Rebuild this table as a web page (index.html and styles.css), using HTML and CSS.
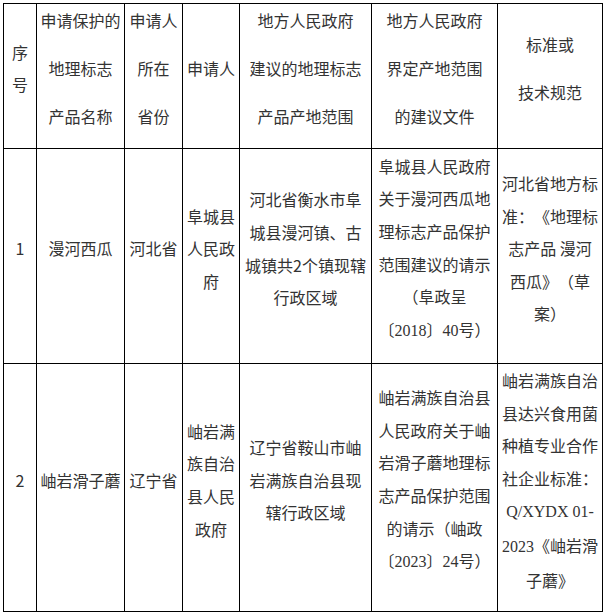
FILE: index.html
```html
<!DOCTYPE html>
<html lang="zh-CN">
<head>
<meta charset="utf-8">
<link rel="stylesheet" href="styles.css">
</head>
<body>
<table class="gi">
  <colgroup>
    <col class="c1"><col class="c2"><col class="c3"><col class="c4"><col class="c5"><col class="c6"><col class="c7">
  </colgroup>
  <tr class="r-head">
    <td><p class="tight">序<br>号</p></td>
    <td><p>申请保护的</p><p>地理标志</p><p>产品名称</p></td>
    <td><p>申请人</p><p>所在</p><p>省份</p></td>
    <td><p>申请人</p></td>
    <td><p>地方人民政府</p><p>建议的地理标志</p><p>产品产地范围</p></td>
    <td><p>地方人民政府</p><p>界定产地范围</p><p>的建议文件</p></td>
    <td><p>标准或</p><p>技术规范</p></td>
  </tr>
  <tr class="r-one">
    <td><p>1</p></td>
    <td><p>漫河西瓜</p></td>
    <td><p>河北省</p></td>
    <td><p>阜城县<br>人民政<br>府</p></td>
    <td><p>河北省衡水市阜<br>城县漫河镇、古<br>城镇共2个镇现辖<br>行政区域</p></td>
    <td><p>阜城县人民政府<br>关于漫河西瓜地<br>理标志产品保护<br>范围建议的请示<br>（阜政呈<br>〔<span class="lat">2018</span>〕<span class="lat">40</span>号）</p></td>
    <td><p>河北省地方标<br>准：《地理标<br>志产品 漫河<br>西瓜》（草<br>案）</p></td>
  </tr>
  <tr class="r-two">
    <td><p>2</p></td>
    <td><p>岫岩滑子蘑</p></td>
    <td><p>辽宁省</p></td>
    <td><p>岫岩满<br>族自治<br>县人民<br>政府</p></td>
    <td><p>辽宁省鞍山市岫<br>岩满族自治县现<br>辖行政区域</p></td>
    <td><p>岫岩满族自治县<br>人民政府关于岫<br>岩滑子蘑地理标<br>志产品保护范围<br>的请示（岫政<br>〔<span class="lat">2023</span>〕<span class="lat">24</span>号）</p></td>
    <td><p>岫岩满族自治<br>县达兴食用菌<br>种植专业合作<br>社企业标准：<br><span class="lat">Q/XYDX 01-</span><br><span class="lat">2023</span>《岫岩滑<br>子蘑》</p></td>
  </tr>
</table>
</body>
</html>
```

FILE: styles.css
```css
html, body {
  margin: 0;
  padding: 0;
  background: #ffffff;
}
body {
  padding: 3px 0 0 3px;
  font-family: "Noto Sans CJK SC", "Noto Sans", sans-serif;
  font-size: 16px;
  color: #333333;
  text-spacing-trim: space-all;
}
.gi {
  border-collapse: collapse;
  table-layout: fixed;
  width: 600px;
}
.c1 { width: 33px; }
.c2 { width: 88px; }
.c3 { width: 58px; }
.c4 { width: 57px; }
.c5 { width: 132px; }
.c6 { width: 126px; }
.c7 { width: 105px; }
.gi td {
  border: 1px solid #000000;
  padding: 0;
  text-align: center;
  vertical-align: middle;
  white-space: nowrap;
  overflow: hidden;
  text-spacing-trim: space-all;
}
.gi p {
  margin: 0 0 15px;
  line-height: 32.6px;
}
.r-head td p {
  line-height: 32px;
  margin-bottom: 16px;
}
.r-head { height: 145px; }
.r-one { height: 215px; }
.r-two { height: 245px; }
.lat {
  font-family: "Liberation Serif", serif;
}
```
